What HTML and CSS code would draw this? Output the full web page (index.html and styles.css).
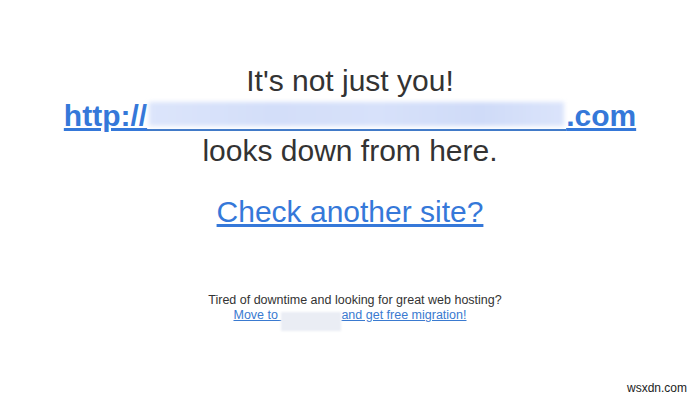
FILE: index.html
```html
<!DOCTYPE html>
<html>
<head>
<meta charset="utf-8">
<link rel="stylesheet" href="styles.css">
</head>
<body>
<main class="page">
  <section class="status">
    <p class="line">It's not just you!</p>
    <p class="line"><a class="domain" href="#">http://<span class="blur-wrap"><span class="blur-big"></span></span>.com</a></p>
    <p class="line">looks down from here.</p>
  </section>
  <p class="again"><a href="#">Check another site?</a></p>
  <section class="promo">
    <p class="promo-q">Tired of downtime and looking for great web hosting?</p>
    <p><a href="#">Move to <span class="blur-small"></span>and get free migration!</a></p>
  </section>
</main>
<div class="watermark">wsxdn.com</div>
</body>
</html>
```
FILE: styles.css
```css
html, body {
  margin: 0;
  padding: 0;
  background: #fff;
}
body {
  width: 700px;
  height: 400px;
  position: relative;
  overflow: hidden;
  font-family: "Liberation Sans", Arial, sans-serif;
  color: #333;
}
.page {
  display: flex;
  flex-direction: column;
  align-items: center;
  padding-top: 63px;
}
.status {
  display: flex;
  flex-direction: column;
  align-items: center;
}
.line {
  margin: 0;
  font-size: 30px;
  line-height: 35px;
}
a {
  color: #3578d9;
  text-decoration: underline;
}
.domain {
  font-weight: bold;
}
.blur-wrap {
  display: inline-block;
  width: 419px;
  vertical-align: -5px;
  border-bottom: 2px solid #3f79c8;
}
.blur-big {
  display: block;
  height: 24px;
  margin: 0 2px 3px;
  background: linear-gradient(90deg, #dce5fb 0%, #d3def9 30%, #d7e1fa 55%, #cfdbf8 80%, #dbe4fb 100%);
  filter: blur(2px);
}
.again {
  margin: 26px 0 0;
  font-size: 30px;
  line-height: 35px;
}
.promo {
  margin-top: 64px;
  text-align: center;
  font-size: 12.5px;
  line-height: 15px;
}
.promo p {
  margin: 0;
}
.promo .promo-q {
  padding-left: 10px;
}
.promo a {
  color: #3a7ad0;
}
.blur-small {
  display: inline-block;
  width: 60px;
  height: 19px;
  margin: -6px 0;
  vertical-align: -6px;
  background: #eaedf4;
  filter: blur(0.8px);
}
.watermark {
  position: absolute;
  right: 13px;
  bottom: 5px;
  font-size: 12px;
  color: #222;
}
```
